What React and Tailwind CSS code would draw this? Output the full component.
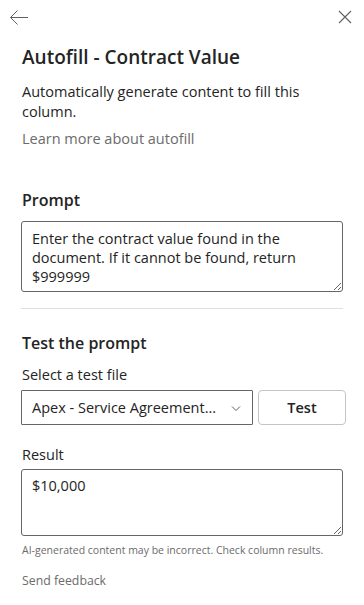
export default function App() {
  return (
    <div className="w-[364px] h-[605px] bg-white text-[#242424] overflow-hidden" style={{ fontFamily: '"Segoe UI", "Open Sans", sans-serif' }}>
      <div className="flex justify-between items-start pl-[9px] pr-[12px] pt-[8px] h-[30px]">
        <svg width="20" height="20" viewBox="0 0 20 20" fill="none" stroke="#616161" strokeWidth="1">
          <path d="M1.5 9.5 H19" />
          <path d="M8.5 2.5 L1.5 9.5 L8.5 16.5" />
        </svg>
        <svg width="14" height="14" viewBox="0 0 14 14" fill="none" stroke="#616161" strokeWidth="1.1" className="mt-[2px]">
          <path d="M1 1 L13 13 M13 1 L1 13" />
        </svg>
      </div>
      <div className="px-[21px]">
        <h1 className="mt-[13px] text-[19px] leading-[28px] font-semibold pl-[1px]">Autofill - Contract Value</h1>
        <p className="mt-[11px] text-[14.5px] leading-[20px] pl-[1px]">Automatically generate content to fill this column.</p>
        <p className="mt-[7px] text-[14.5px] leading-[20px] text-[#6b6b6b] pl-[1px]">Learn more about autofill</p>
        <h2 className="mt-[40px] text-[16px] leading-[22px] font-semibold pl-[1px]">Prompt</h2>
        <textarea
          readOnly
          className="mt-[10px] block w-[322px] h-[71px] border border-[#666666] rounded-[3px] px-[10px] pt-[7px] text-[14.5px] leading-[19px] outline-none"
          value="Enter the contract value found in the document. If it cannot be found, return $999999"
        />
        <div className="mt-[16px] h-px w-[322px] bg-[#e0e0e0]" />
        <h2 className="mt-[23px] text-[16px] leading-[22px] font-semibold pl-[1px]">Test the prompt</h2>
        <p className="mt-[11px] text-[14.5px] leading-[20px] font-medium pl-[1px]">Select a test file</p>
        <div className="mt-[5px] flex gap-[5px]">
          <div className="shrink-0 w-[232px] h-[35px] border border-[#666666] rounded-[1px] flex items-center justify-between pl-[10px] pr-[10px]">
            <span className="text-[14.5px]">Apex - Service Agreement...</span>
            <svg width="12" height="12" viewBox="0 0 12 12" fill="none" stroke="#616161" strokeWidth="1">
              <path d="M2 4.5 L6 8.5 L10 4.5" />
            </svg>
          </div>
          <div className="shrink-0 w-[88px] h-[35px] border border-[#c4c4c4] rounded-[4px] flex items-center justify-center text-[14.5px] font-semibold">Test</div>
        </div>
        <p className="mt-[20px] text-[14.5px] leading-[20px] font-medium pl-[1px]">Result</p>
        <textarea
          readOnly
          className="mt-[4px] block w-[322px] h-[67px] border border-[#666666] rounded-[3px] px-[10px] pt-[6px] text-[14.5px] leading-[20px] outline-none"
          value="$10,000"
        />
        <p className="mt-[7px] text-[10.5px] leading-[14px] text-[#6b6b6b] pl-[1px]">AI-generated content may be incorrect. Check column results.</p>
        <p className="mt-[16px] text-[12.3px] leading-[16px] text-[#6b6b6b] pl-[1px]">Send feedback</p>
      </div>
    </div>
  );
}
